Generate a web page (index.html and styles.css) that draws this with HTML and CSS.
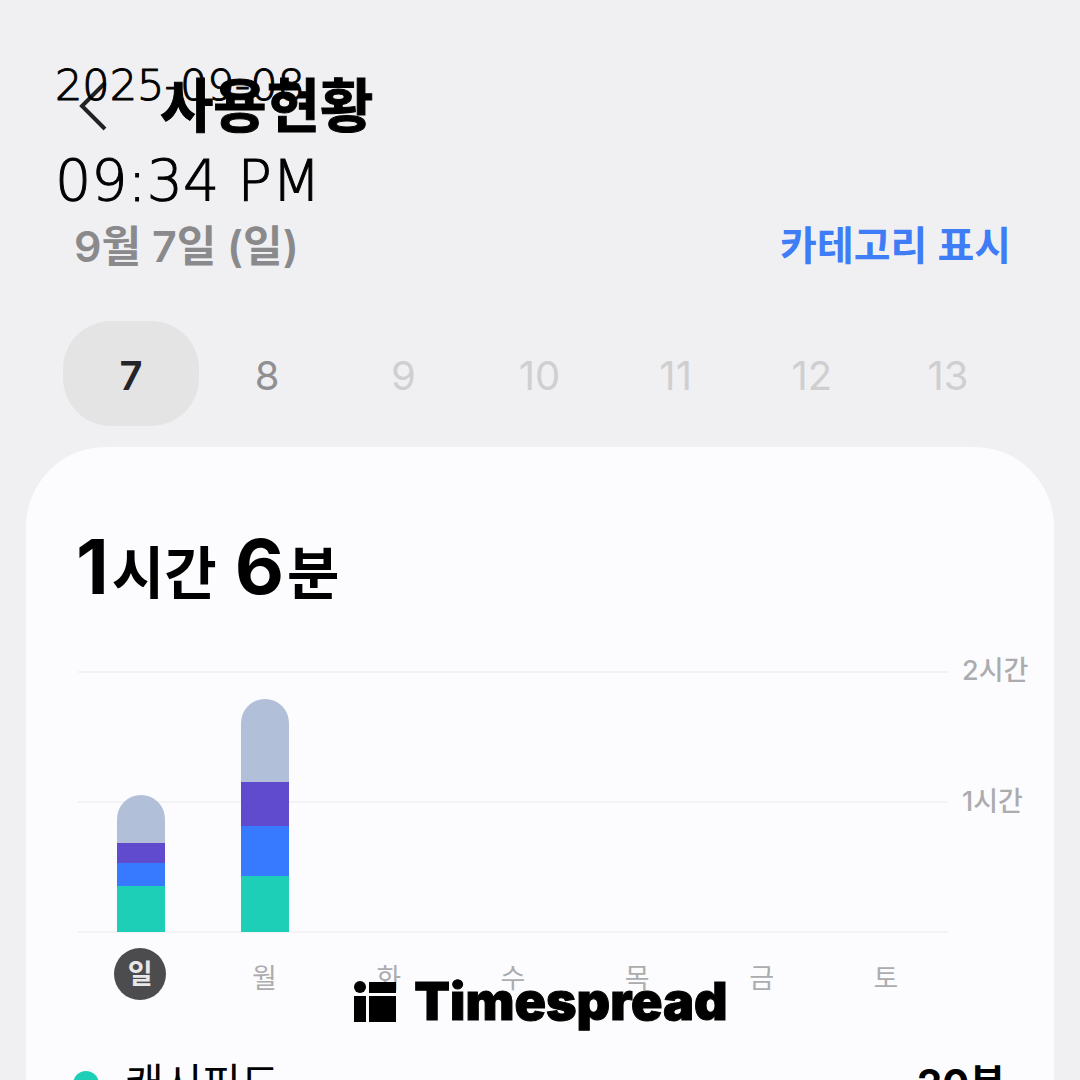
FILE: index.html
```html
<!DOCTYPE html>
<html lang="ko">
<head>
<meta charset="utf-8">
<meta name="viewport" content="width=device-width, initial-scale=1">
<title>사용현황</title>
<link rel="stylesheet" href="styles.css">
</head>
<body>
<div class="screen">
  <header class="top-bar">
    <button class="back" type="button" aria-label="뒤로">
      <svg width="28" height="52" viewBox="0 0 28 52" fill="none" stroke="#222" stroke-width="4"><path d="M26 3 3 26l23 23"/></svg>
    </button>
    <h1 class="title">사용현황</h1>
  </header>

  <div class="date-row">
    <p class="date">9월 7일 (일)</p>
    <a class="category-link" href="#categories">카테고리 표시</a>
  </div>

  <nav class="week" aria-label="날짜 선택">
    <button class="day selected" type="button">7</button>
    <button class="day today" type="button">8</button>
    <button class="day" type="button">9</button>
    <button class="day" type="button">10</button>
    <button class="day" type="button">11</button>
    <button class="day" type="button">12</button>
    <button class="day" type="button">13</button>
  </nav>

  <main class="card" id="categories">
    <h2 class="total"><span class="num">1</span>시간<span class="num"> 6</span>분</h2>

    <section class="chart" aria-label="요일별 사용 시간">
      <div class="plot">
        <div class="lines"><i></i><i></i></div>
        <div class="bars">
          <div class="bar">
            <span class="other" style="height:48px"></span>
            <span class="purple" style="height:20px"></span>
            <span class="blue" style="height:23px"></span>
            <span class="green" style="height:46px"></span>
          </div>
          <div class="bar">
            <span class="other" style="height:83px"></span>
            <span class="purple" style="height:44px"></span>
            <span class="blue" style="height:50px"></span>
            <span class="green" style="height:56px"></span>
          </div>
        </div>
      </div>
      <div class="scale"><span>2시간</span><span>1시간</span></div>
      <div class="weekdays">
        <span class="current">일</span><span>월</span><span>화</span><span>수</span><span>목</span><span>금</span><span>토</span>
      </div>
    </section>

    <ul class="apps">
      <li class="app"><span class="dot"></span><span class="app-name">캐시피드</span><span class="app-time">20분</span></li>
    </ul>
  </main>

  <div class="stamp">
    <p class="stamp-date">2025-09-08</p>
    <p class="stamp-time">09:34 PM</p>
  </div>

  <div class="brand">
    <svg width="42" height="42" viewBox="0 0 42 42"><circle cx="6" cy="6" r="6"/><path d="M15 1h27v11H15zM0 15h12v26H0zM15 15h27v26H15z"/></svg>
    <span>Timespread</span>
  </div>
</div>
</body>
</html>
```
FILE: styles.css
```css
* { box-sizing: border-box; margin: 0; padding: 0; }

body {
  background: #f0f0f2;
  color: #000;
  font-family: "Inter", "Noto Sans CJK KR", sans-serif;
}

button { border: 0; background: none; font: inherit; cursor: pointer; }

.screen {
  position: relative;
  display: flex;
  flex-direction: column;
  height: 100vh;
  overflow: hidden;
}

.top-bar {
  display: flex;
  align-items: center;
  gap: 53px;
  padding: 66px 79px 0;
}
.back { display: flex; }
.title {
  font-size: 58px;
  font-weight: 700;
  line-height: 80px;
  -webkit-text-stroke: 1px currentColor;
}

.date-row {
  display: flex;
  justify-content: space-between;
  padding: 70px 69px 0 74px;
  line-height: 60px;
  font-weight: 600;
}
.date { font-size: 43px; color: #8a8a8c; }
.category-link { font-size: 40px; color: #3f7df6; text-decoration: none; }

.week {
  display: grid;
  grid-template-columns: repeat(7, 1fr);
  padding: 45px 64px 0 63px;
}
.day {
  height: 105px;
  padding-top: 4px;
  border-radius: 48px;
  font-size: 40px;
  color: #cfcfd1;
}
.day.today { color: #909092; }
.day.selected { background: #e4e4e5; color: #252527; font-weight: 600; }

.card {
  flex: 1 0 auto;
  margin: 21px 26px 0;
  padding: 71px 24px 0 50px;
  border-radius: 80px 80px 0 0;
  background: #fcfcfe;
}

.total {
  font-size: 57px;
  font-weight: 700;
  line-height: 96px;
}
.num { margin-right: 3px; font-size: 76px; }

.chart {
  display: grid;
  grid-template-columns: 1fr 68px;
  column-gap: 14px;
  margin: 49px 0 0 2px;
}
.plot { display: grid; height: 262px; border-bottom: 2px solid #f3f3f5; }
.lines, .bars { grid-area: 1 / 1; }
.lines { display: grid; grid-template-rows: 1fr 1fr; }
.lines i { border-top: 2px solid #f3f3f5; }
.bars {
  display: grid;
  grid-template-columns: repeat(7, 1fr);
  align-items: end;
  justify-items: center;
  margin: 0 -1px -1px 1px;
}
.bar {
  display: flex;
  flex-direction: column;
  width: 48px;
  border-radius: 24px 24px 0 0;
  overflow: hidden;
}
.other { background: #b1bfd9; }
.purple { background: #604bce; }
.blue { background: #387aff; }
.green { background: #1dcfb7; }

.scale {
  display: grid;
  grid-template-rows: 1fr 1fr;
  font-size: 27px;
  font-weight: 500;
  line-height: 40px;
  color: #acacae;
  white-space: nowrap;
}
.scale span { margin-top: -20px; }

.weekdays {
  display: grid;
  grid-template-columns: repeat(7, 1fr);
  justify-items: center;
  margin-top: 15px;
  font-size: 27px;
  line-height: 62px;
  color: #acacae;
}
.current {
  width: 52px;
  height: 52px;
  border-radius: 50%;
  background: #4c4c4e;
  color: #e8e8ea;
  font-weight: 700;
  line-height: 54px;
  text-align: center;
}

.apps { list-style: none; margin-top: 44px; }
.app {
  display: flex;
  align-items: center;
  padding-right: 24px;
  line-height: 60px;
}
.dot { width: 26px; height: 26px; margin-left: -3px; border-radius: 50%; background: #1dcfb7; }
.app-name { margin-left: 26px; font-size: 42px; }
.app-time { margin-left: auto; font-size: 40px; font-weight: 700; }

/* capture stamp and brand mark lie over the screen */
.stamp {
  position: absolute;
  top: 55px;
  left: 55px;
  font-family: "DejaVu Sans Light", "DejaVu Sans", sans-serif;
  font-weight: 200;
  -webkit-text-stroke: 1px currentColor;
}
.stamp-date { font-size: 43px; line-height: 60px; }
.stamp-time { font-size: 57px; line-height: 84px; margin-top: 24px; }

.brand {
  position: absolute;
  left: 0;
  right: 0;
  bottom: 46px;
  display: flex;
  align-items: center;
  justify-content: center;
  gap: 18px;
  padding-left: 2px;
  font-size: 52px;
  font-weight: 900;
  line-height: 64px;
}
.brand span { -webkit-text-stroke: 1px currentColor; }
```
